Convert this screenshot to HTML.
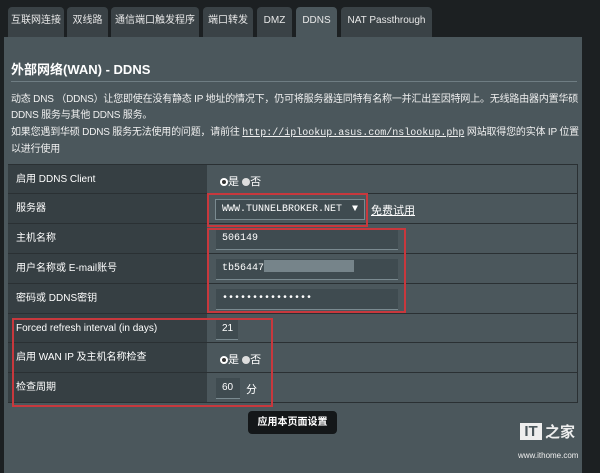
<!DOCTYPE html><html><head><meta charset="utf-8"><style>
*{margin:0;padding:0;box-sizing:border-box}
html,body{background:#1c2022}
body{width:600px;height:473px;position:relative;overflow:hidden;font-family:"Liberation Sans","Noto Sans CJK SC",sans-serif;color:#fff;font-size:11px}
.a{position:absolute}
.tab{position:absolute;top:7px;height:30px;background:#3a4246;border-radius:4px 4px 0 0;line-height:28px;text-align:center;font-size:10px;color:#e8e8e8}
.panel{left:4px;top:37px;width:578px;height:436px;background:#4b575c}
.row{position:absolute;left:8px;width:570px;height:30px;border-top:1px solid #2a3033}
.lab{position:absolute;left:0;top:0;width:199px;height:29px;background:#363f43;line-height:29px;padding-left:8px;font-size:10px}
.inp{position:absolute;background:#3f4b50;border-bottom:1px solid #7a8a90;color:#fff;font-family:"Liberation Mono",monospace;font-size:10px;line-height:20px;padding-left:6px}
.red{position:absolute;border:2px solid #c8383d}
.rad{display:inline-block;width:8px;height:8px;border-radius:50%;background:#ddd;vertical-align:-1px}
.rad.on{border:2px solid #fff;background:#333}
</style></head><body>
<div class="tab" style="left:8px;width:56px">互联网连接</div>
<div class="tab" style="left:67px;width:41px">双线路</div>
<div class="tab" style="left:111px;width:88px">通信端口触发程序</div>
<div class="tab" style="left:203px;width:50px">端口转发</div>
<div class="tab" style="left:257px;width:35px">DMZ</div>
<div class="tab" style="left:296px;width:41px;background:#4b575c">DDNS</div>
<div class="tab" style="left:341px;width:91px">NAT Passthrough</div>
<div class="a panel"></div>
<div class="a" style="left:11px;top:59px;font-size:13px;font-weight:bold">外部网络(WAN) - DDNS</div>
<div class="a" style="left:11px;top:81px;width:566px;height:1px;background:#6f7d83"></div>
<div class="a" style="left:11px;top:92px;width:568px;font-size:10px;line-height:16.3px;color:#f0f0f0;letter-spacing:-0.2px">动态 DNS （DDNS）让您即使在没有静态 IP 地址的情况下，仍可将服务器连同特有名称一并汇出至因特网上。无线路由器内置华硕 DDNS 服务与其他 DDNS 服务。<br>如果您遇到华硕 DDNS 服务无法使用的问题，请前往 <u style="font-family:'Liberation Mono',monospace;letter-spacing:0">http://iplookup.asus.com/nslookup.php</u> 网站取得您的实体 IP 位置以进行使用</div>
<div class="a" style="left:8px;top:164px;width:570px;height:239px;border:1px solid #2a3033;background:#4b575c"></div>
<div class="row" style="top:164px"><div class="lab">启用 DDNS Client</div><div class="a" style="left:212px;top:8px"><span class="rad on"></span>是 <span class="rad"></span>否</div></div>
<div class="row" style="top:193px"><div class="lab">服务器</div><div class="inp" style="left:207px;top:5px;width:150px;height:21px;border:1px solid #7a8a90">WWW.TUNNELBROKER.NET <span style="position:absolute;right:6px">▼</span></div><div class="a" style="left:363px;top:8px;text-decoration:underline">免费试用</div></div>
<div class="row" style="top:223px"><div class="lab">主机名称</div><div class="inp" style="left:208px;top:5px;width:182px;height:21px">506149</div></div>
<div class="row" style="top:253px"><div class="lab">用户名称或 E-mail账号</div><div class="inp" style="left:208px;top:5px;width:182px;height:21px">tb56447<span style="display:inline-block;width:90px;height:12px;background:#8e9ca2;vertical-align:-2px;opacity:.7"></span></div></div>
<div class="row" style="top:283px"><div class="lab">密码或 DDNS密钥</div><div class="inp" style="left:208px;top:5px;width:182px;height:21px">•••••••••••••••</div></div>
<div class="row" style="top:313px"><div class="lab">Forced refresh interval (in days)</div><div class="inp" style="left:208px;top:5px;width:22px;height:21px;font-family:'Liberation Sans'">21</div></div>
<div class="row" style="top:342px"><div class="lab">启用 WAN IP 及主机名称检查</div><div class="a" style="left:212px;top:8px"><span class="rad on"></span>是 <span class="rad"></span>否</div></div>
<div class="row" style="top:372px"><div class="lab">检查周期</div><div class="inp" style="left:208px;top:5px;width:24px;height:21px;font-family:'Liberation Sans'">60</div><div class="a" style="left:238px;top:8px">分</div></div>
<div class="red" style="left:207px;top:193px;width:161px;height:34px"></div>
<div class="red" style="left:207px;top:228px;width:199px;height:85px"></div>
<div class="red" style="left:12px;top:318px;width:261px;height:89px"></div>
<div class="a" style="left:248px;top:411px;width:89px;height:23px;background:#141719;border-radius:4px;text-align:center;line-height:23px;font-size:10px;font-weight:bold">应用本页面设置</div>
<div class="a" style="left:520px;top:423px;width:22px;height:17px;background:#eee;color:#4b575c;font-weight:bold;font-size:15px;line-height:17px;text-align:center">IT</div>
<div class="a" style="left:545px;top:421px;font-size:15px;color:#eee;font-weight:bold">之家</div>
<div class="a" style="left:518px;top:451px;font-size:8px;color:#eee">www.ithome.com</div>
</body></html>
